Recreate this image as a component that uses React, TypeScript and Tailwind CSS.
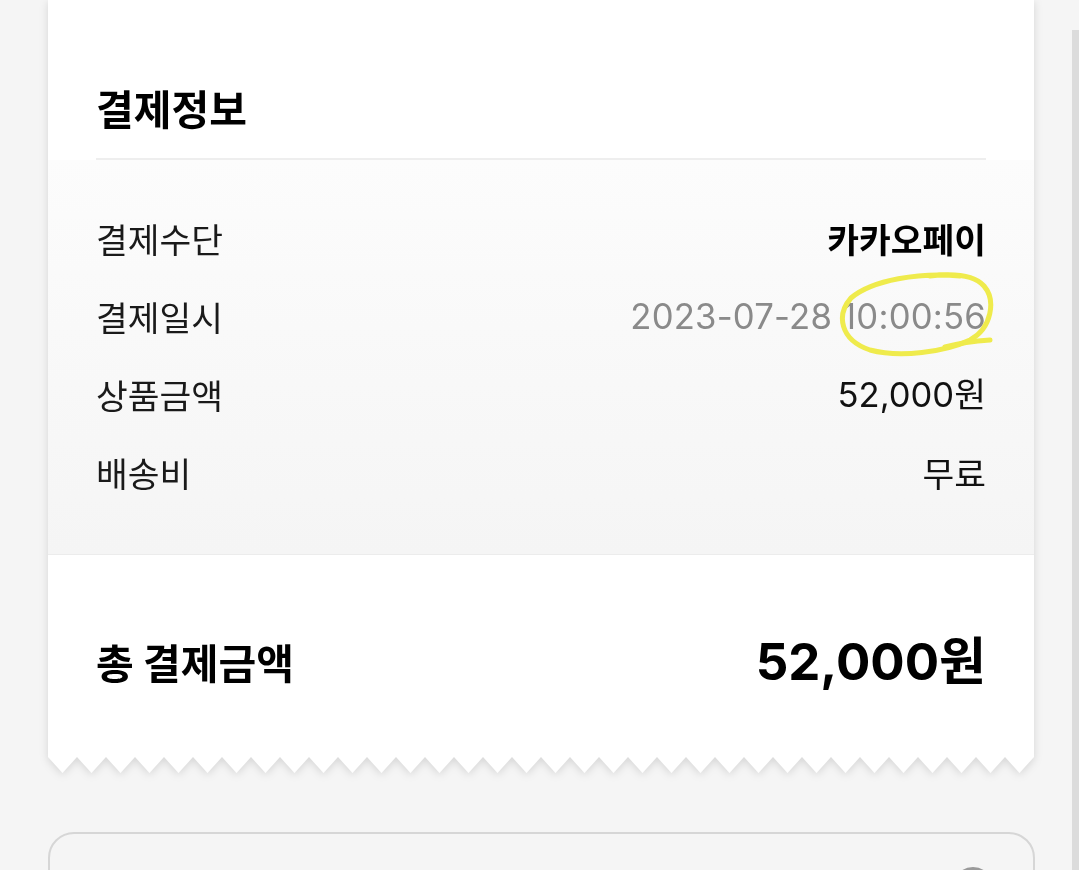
import React from "react";

const KR = "font-['Noto_Sans_CJK_KR',sans-serif]";
const NUM = "font-['Inter','Noto_Sans_CJK_KR',sans-serif]";

function Zigzag() {
  const period = 29;
  const teeth = 34;
  const pts: string[] = ["0,0"];
  for (let i = 0; i < teeth; i++) {
    pts.push(`${i * period + period / 2},16`);
    pts.push(`${(i + 1) * period},0`);
  }
  return (
    <svg
      className="block w-[986px] h-[17px]"
      viewBox="0 0 986 17"
      preserveAspectRatio="none"
    >
      <polygon points={pts.join(" ")} fill="#ffffff" />
    </svg>
  );
}

function Highlight() {
  // page coords offset by (830, 270)
  return (
    <svg
      className="absolute left-[782px] top-[110px] w-[172px] h-[95px] pointer-events-none"
      viewBox="0 0 172 95"
      fill="none"
    >
      <path
        d="M130 6 C90 2 42 10 21 28 C6 45 10 70 40 80 C70 88 115 82 140 70 C162 58 166 30 154 16 C145 6 125 3 100 6"
        stroke="#efeb4c"
        strokeWidth="5"
        strokeLinecap="round"
        strokeLinejoin="round"
      />
      <path
        d="M115 77 C130 73 145 71 160 70"
        stroke="#efeb4c"
        strokeWidth="5"
        strokeLinecap="round"
      />
    </svg>
  );
}

function Row({ label, children }: { label: string; children: React.ReactNode }) {
  return (
    <div className="flex h-[78px] items-center justify-between px-[48px]">
      <span className={`${KR} text-[34.5px] leading-none text-[#1a1a1a]`}>{label}</span>
      {children}
    </div>
  );
}

export default function App() {
  return (
    <div className="flex h-[870px] w-full overflow-hidden bg-[#f5f5f5]">
      <div className="flex w-[1034px] shrink-0 flex-col pl-[48px]">
        <div className="w-[986px] drop-shadow-[0_2px_4px_rgba(0,0,0,0.13)]">
          <div className="relative bg-white">
            <div className="mx-[48px] border-b-2 border-[#eeeeee] pb-[27px] pt-[83px]">
              <h2 className={`${KR} text-[41px] font-bold leading-[48px] text-black`}>결제정보</h2>
            </div>
            <div className="relative border-b border-[#ececec] bg-gradient-to-b from-[#fcfcfc] to-[#f5f5f5] pb-[43px] pt-[39px]">
              <Row label="결제수단">
                <span className={`${KR} text-[34.5px] font-bold leading-none text-black`}>카카오페이</span>
              </Row>
              <Row label="결제일시">
                <span className={`${NUM} text-[34.7px] leading-none tracking-[0.2px] text-[#8a8a8a]`}>
                  2023-07-28 10:00:56
                </span>
              </Row>
              <Row label="상품금액">
                <span className={`${NUM} text-[34.6px] leading-none text-[#111111]`}>52,000원</span>
              </Row>
              <Row label="배송비">
                <span className={`${KR} text-[34.5px] leading-none text-[#111111]`}>무료</span>
              </Row>
              <Highlight />
            </div>
            <div className="flex h-[202px] items-center justify-between px-[48px] pt-[10px]">
              <span className={`${KR} text-[41px] font-bold leading-none text-black`}>총 결제금액</span>
              <span className={`${NUM} text-[51px] font-bold leading-none text-black`}>52,000원</span>
            </div>
          </div>
          <Zigzag />
        </div>
        <div className="mt-[58px] flex h-[120px] w-[987px] shrink-0 justify-end rounded-[26px] border-2 border-[#d6d6d6] pr-[40px] pt-[33px]">
          <div className="h-[40px] w-[40px] rounded-full border-[3px] border-[#9a9a9a]" />
        </div>
      </div>
      <div className="flex-1" />
      <div className="mt-[30px] w-[7px] shrink-0 bg-[#dcdcdc]" />
    </div>
  );
}
